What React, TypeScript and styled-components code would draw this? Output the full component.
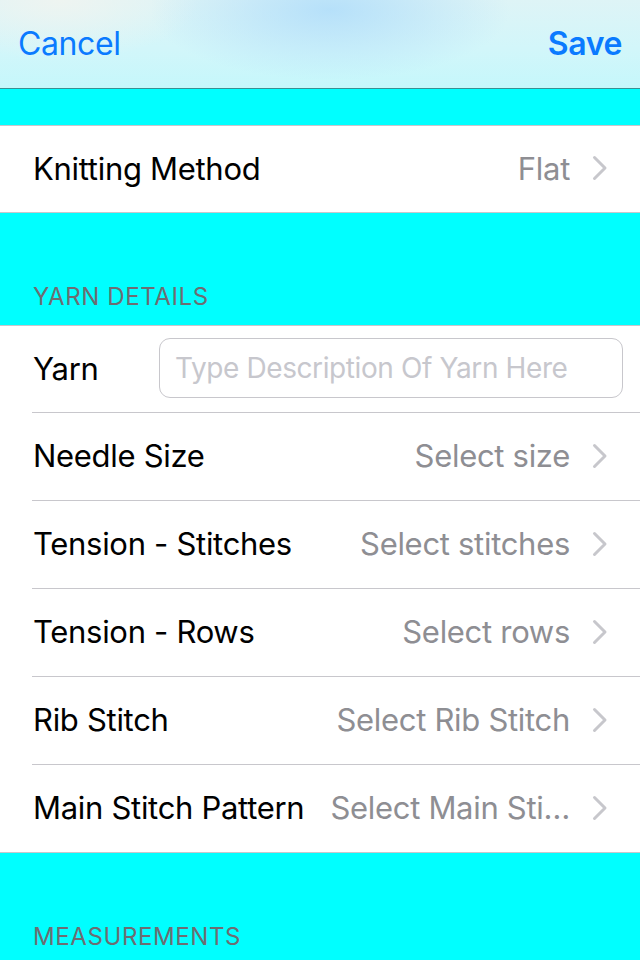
import React from "react";
import styled, { createGlobalStyle } from "styled-components";

const Global = createGlobalStyle`
  html, body { margin: 0; padding: 0; background: #00ffff; }
  body { font-family: Inter, "Noto Sans", "Liberation Sans", sans-serif; -webkit-font-smoothing: antialiased; }
  * { box-sizing: border-box; }
`;

const Page = styled.div`
  width: 640px;
  height: 960px;
  overflow: hidden;
  background: #00ffff;
  display: flex;
  flex-direction: column;
`;

const NavBar = styled.header`
  height: 89px;
  flex-shrink: 0;
  display: flex;
  align-items: center;
  justify-content: space-between;
  padding: 0 18px 1px 18px;
  border-bottom: 1px solid #3c8f92;
  background:
    radial-gradient(ellipse 180px 70px at 330px 10px, rgba(178, 222, 250, 0.9), rgba(178, 222, 250, 0) 100%),
    radial-gradient(ellipse 140px 60px at 60px 0px, rgba(240, 244, 240, 0.9), rgba(240, 244, 240, 0) 100%),
    linear-gradient(180deg, #def4f6 0%, #d2f6fa 55%, #c5f7fb 100%);
`;

const NavButton = styled.button<{ $bold?: boolean }>`
  border: none;
  background: none;
  padding: 0;
  font-family: inherit;
  font-size: 32px;
  font-weight: ${(p) => (p.$bold ? 600 : 400)};
  color: #0a7aff;
  letter-spacing: -0.4px;
  cursor: pointer;
`;

const Gap = styled.div<{ $h: number }>`
  height: ${(p) => p.$h}px;
  flex-shrink: 0;
`;

const SectionHeader = styled.div`
  height: 112px;
  flex-shrink: 0;
  display: flex;
  align-items: flex-end;
  padding: 0 0 14px 33px;
  font-size: 24px;
  line-height: 28px;
  color: #6d6d72;
  letter-spacing: 0.6px;
  text-transform: uppercase;
`;

const Group = styled.section`
  background: #ffffff;
  border-top: 1px solid #c8c7cc;
  border-bottom: 1px solid #c8c7cc;
  flex-shrink: 0;
`;

const Row = styled.div`
  padding-left: 33px;
`;

const RowInner = styled.div<{ $h: number; $last?: boolean }>`
  height: ${(p) => p.$h}px;
  display: flex;
  align-items: center;
  gap: 22px;
  padding: 0 32px 2px 1px;
  margin-left: -1px;
  border-bottom: ${(p) => (p.$last ? "none" : "1px solid #c8c7cc")};
`;

const Label = styled.span`
  font-size: 31px;
  color: #000;
  white-space: nowrap;
  flex-shrink: 0;
  letter-spacing: -0.3px;
`;

const Value = styled.span`
  margin-left: auto;
  font-size: 31px;
  color: #8e8e93;
  white-space: nowrap;
  overflow: hidden;
  text-overflow: ellipsis;
  min-width: 0;
  letter-spacing: -0.3px;
`;

const Chevron = styled.svg`
  width: 16px;
  height: 26px;
  flex-shrink: 0;
`;

const YarnInput = styled.input`
  margin-left: auto;
  width: 464px;
  height: 60px;
  border: 1px solid #c8c7cc;
  border-radius: 11px;
  padding: 0 12px 0 15px;
  font-family: inherit;
  font-size: 28px;
  letter-spacing: -0.4px;
  color: #000;
  background: #fff;
  outline: none;
  margin-right: -15px;
  &::placeholder {
    color: #c7c7cd;
  }
`;

const ChevronIcon = () => (
  <Chevron viewBox="0 0 16 26">
    <path d="M2.5 2.5 L13 13 L2.5 23.5" fill="none" stroke="#c7c7cc" strokeWidth="3" strokeLinecap="round" strokeLinejoin="round" />
  </Chevron>
);

const SelectRow = ({ label, value, h = 88, last }: { label: string; value: string; h?: number; last?: boolean }) => (
  <Row>
    <RowInner $h={h} $last={last}>
      <Label>{label}</Label>
      <Value>{value}</Value>
      <ChevronIcon />
    </RowInner>
  </Row>
);

export default function App() {
  return (
    <Page>
      <Global />
      <NavBar>
        <NavButton>Cancel</NavButton>
        <NavButton $bold>Save</NavButton>
      </NavBar>
      <Gap $h={36} />
      <Group>
        <SelectRow label="Knitting Method" value="Flat" h={86} last />
      </Group>
      <SectionHeader>Yarn Details</SectionHeader>
      <Group>
        <Row>
          <RowInner $h={87}>
            <Label>Yarn</Label>
            <YarnInput placeholder="Type Description Of Yarn Here" />
          </RowInner>
        </Row>
        <SelectRow label="Needle Size" value="Select size" />
        <SelectRow label="Tension - Stitches" value="Select stitches" />
        <SelectRow label="Tension - Rows" value="Select rows" />
        <SelectRow label="Rib Stitch" value="Select Rib Stitch" />
        <SelectRow label="Main Stitch Pattern" value="Select Main Sti…" h={87} last />
      </Group>
      <SectionHeader>Measurements</SectionHeader>
    </Page>
  );
}
